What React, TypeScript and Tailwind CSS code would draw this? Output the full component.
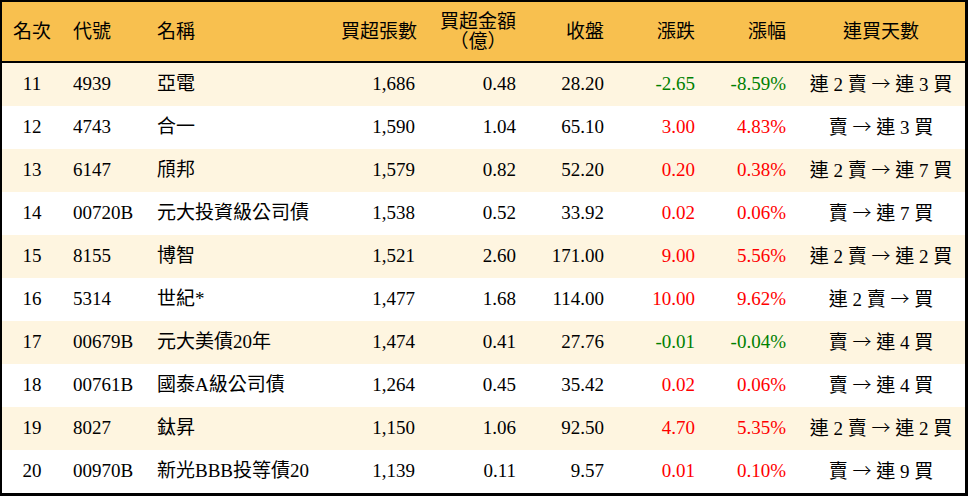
import React from "react";

interface IRow {
  rank: number;
  code: string;
  name: string;
  lots: string;
  amount: string;
  close: string;
  change: string;
  pct: string;
  from: string;
  to: string;
}

const rows: IRow[] = [
  { rank: 11, code: "4939", name: "亞電", lots: "1,686", amount: "0.48", close: "28.20", change: "-2.65", pct: "-8.59%", from: "連 2 賣", to: "連 3 買" },
  { rank: 12, code: "4743", name: "合一", lots: "1,590", amount: "1.04", close: "65.10", change: "3.00", pct: "4.83%", from: "賣", to: "連 3 買" },
  { rank: 13, code: "6147", name: "頎邦", lots: "1,579", amount: "0.82", close: "52.20", change: "0.20", pct: "0.38%", from: "連 2 賣", to: "連 7 買" },
  { rank: 14, code: "00720B", name: "元大投資級公司債", lots: "1,538", amount: "0.52", close: "33.92", change: "0.02", pct: "0.06%", from: "賣", to: "連 7 買" },
  { rank: 15, code: "8155", name: "博智", lots: "1,521", amount: "2.60", close: "171.00", change: "9.00", pct: "5.56%", from: "連 2 賣", to: "連 2 買" },
  { rank: 16, code: "5314", name: "世紀*", lots: "1,477", amount: "1.68", close: "114.00", change: "10.00", pct: "9.62%", from: "連 2 賣", to: "買" },
  { rank: 17, code: "00679B", name: "元大美債20年", lots: "1,474", amount: "0.41", close: "27.76", change: "-0.01", pct: "-0.04%", from: "賣", to: "連 4 買" },
  { rank: 18, code: "00761B", name: "國泰A級公司債", lots: "1,264", amount: "0.45", close: "35.42", change: "0.02", pct: "0.06%", from: "賣", to: "連 4 買" },
  { rank: 19, code: "8027", name: "鈦昇", lots: "1,150", amount: "1.06", close: "92.50", change: "4.70", pct: "5.35%", from: "連 2 賣", to: "連 2 買" },
  { rank: 20, code: "00970B", name: "新光BBB投等債20", lots: "1,139", amount: "0.11", close: "9.57", change: "0.01", pct: "0.10%", from: "賣", to: "連 9 買" },
];

const cols = "grid grid-cols-[60px_84px_184px_96px_101px_88px_91px_91px_168px]";

function App() {
  return (
    <div
      className="w-[968px] h-[496px] bg-white text-black text-[19px]"
      style={{ fontFamily: '"Liberation Serif", "Noto Sans CJK TC", serif' }}
    >
      <div className="border-t-2 border-l-2 border-r-[3px] border-b-[3px] border-black">
        {/* header */}
        <div className={`${cols} h-[61px] items-center bg-[#f8c04f] border-b-2 border-black leading-[20px] whitespace-nowrap`}>
          <div className="px-[11px] text-center">名次</div>
          <div className="px-[11px]">代號</div>
          <div className="px-[11px]">名稱</div>
          <div className="px-[11px] text-right">買超張數</div>
          <div className="px-[11px] flex justify-end">
            <div className="text-center">
              <div>買超金額</div>
              <div>（億）</div>
            </div>
          </div>
          <div className="px-[11px] text-right">收盤</div>
          <div className="px-[11px] text-right">漲跌</div>
          <div className="px-[11px] text-right">漲幅</div>
          <div className="px-[11px] text-center">連買天數</div>
        </div>
        {rows.map((r, i) => {
          const color = r.change.startsWith("-") ? "text-[#008000]" : "text-[#ff0000]";
          return (
            <div
              key={r.rank}
              className={`${cols} h-[43px] items-center whitespace-nowrap ${i % 2 === 0 ? "bg-[#fef5e0]" : "bg-white"}`}
            >
              <div className="px-[11px] text-center">{r.rank}</div>
              <div className="px-[11px]">{r.code}</div>
              <div className="px-[11px]">{r.name}</div>
              <div className="px-[11px] text-right">{r.lots}</div>
              <div className="px-[11px] text-right">{r.amount}</div>
              <div className="px-[11px] text-right">{r.close}</div>
              <div className={`px-[11px] text-right ${color}`}>{r.change}</div>
              <div className={`px-[11px] text-right ${color}`}>{r.pct}</div>
              <div className="px-[11px] text-center whitespace-pre">
                {r.from}{" "}
                <span style={{ fontFamily: '"Noto Sans CJK TC", sans-serif' }} className="font-light">
                  →
                </span>{" "}
                {r.to}
              </div>
            </div>
          );
        })}
      </div>
    </div>
  );
}

export default App;
